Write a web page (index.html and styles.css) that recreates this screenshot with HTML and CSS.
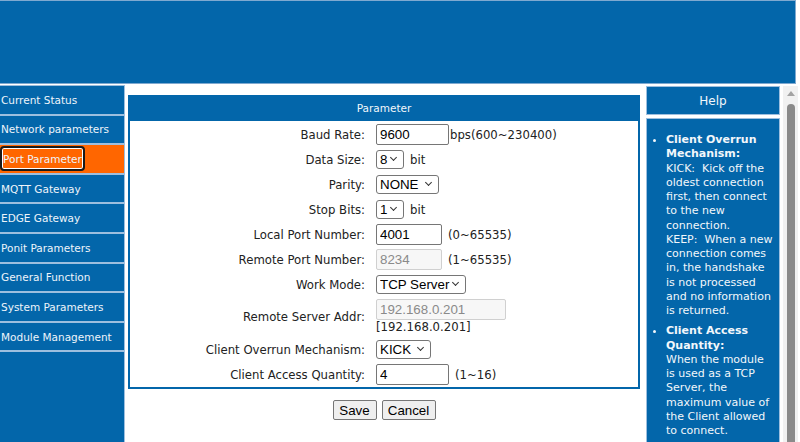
FILE: index.html
```html
<!DOCTYPE html>
<html>
<head>
<meta charset="utf-8">
<link rel="stylesheet" href="styles.css">
</head>
<body>
<div class="header"></div>
<div class="page">
  <nav class="nav">
    <a class="nav-item">Current Status</a>
    <a class="nav-item">Network parameters</a>
    <a class="nav-item active"><span class="focus">Port Parameter</span></a>
    <a class="nav-item">MQTT Gateway</a>
    <a class="nav-item">EDGE Gateway</a>
    <a class="nav-item">Ponit Parameters</a>
    <a class="nav-item">General Function</a>
    <a class="nav-item">System Parameters</a>
    <a class="nav-item">Module Management</a>
  </nav>
  <main class="main">
    <section class="panel">
      <div class="panel-title">Parameter</div>
      <div class="form">
        <label class="lbl">Baud Rate:</label>
        <div class="ctl"><input class="inp w73" type="text" value="9600"><span class="unit tight">bps(600~230400)</span></div>

        <label class="lbl">Data Size:</label>
        <div class="ctl"><span class="sel-wrap"><select class="sel w28"><option>8</option></select></span><span class="unit">bit</span></div>

        <label class="lbl">Parity:</label>
        <div class="ctl"><span class="sel-wrap"><select class="sel w63"><option>NONE</option></select></span></div>

        <label class="lbl">Stop Bits:</label>
        <div class="ctl"><span class="sel-wrap"><select class="sel w28"><option>1</option></select></span><span class="unit">bit</span></div>

        <label class="lbl">Local Port Number:</label>
        <div class="ctl"><input class="inp w66" type="text" value="4001"><span class="unit">(0~65535)</span></div>

        <label class="lbl">Remote Port Number:</label>
        <div class="ctl"><input class="inp w66" type="text" value="8234" disabled><span class="unit">(1~65535)</span></div>

        <label class="lbl">Work Mode:</label>
        <div class="ctl"><span class="sel-wrap"><select class="sel w90"><option>TCP Server</option></select></span></div>

        <label class="lbl">Remote Server Addr:</label>
        <div class="ctl stack"><input class="inp w130" type="text" value="192.168.0.201" disabled><span class="addr">[192.168.0.201]</span></div>

        <label class="lbl">Client Overrun Mechanism:</label>
        <div class="ctl"><span class="sel-wrap"><select class="sel w55"><option>KICK</option></select></span></div>

        <label class="lbl">Client Access Quantity:</label>
        <div class="ctl"><input class="inp w73" type="text" value="4"><span class="unit">(1~16)</span></div>
      </div>
    </section>
    <div class="actions">
      <button class="btn btn-save">Save</button>
      <button class="btn btn-cancel">Cancel</button>
    </div>
  </main>
  <aside class="help">
    <div class="help-title">Help</div>
    <div class="help-body">
      <ul class="help-list">
        <li><b>Client Overrun Mechanism:</b><br>KICK:&nbsp; Kick off the oldest connection first, then connect to the new connection.<br>KEEP:&nbsp; When a new connection comes in, the handshake is not processed and no information is returned.</li>
        <li><b>Client Access Quantity:</b><br>When the module is used as a TCP Server, the maximum value of the Client allowed to connect.</li>
      </ul>
    </div>
  </aside>
  <div class="scrollbar">
    <div class="arrow"></div>
    <div class="thumb"></div>
  </div>
</div>
</body>
</html>
```
FILE: styles.css
```css
html, body {
  margin: 0;
  padding: 0;
  background: #ffffff;
  overflow: hidden;
  height: 442px;
}
body {
  font-family: "DejaVu Sans", Verdana, sans-serif;
  width: 800px;
}
.header {
  width: 795px;
  height: 82px;
  background: #0366aa;
  border: 1px solid #7fa9d0;
  border-left: none;
  box-sizing: content-box;
}
.page {
  display: flex;
  align-items: flex-start;
  height: 358px;
}
.nav {
  width: 124px;
  height: 360px;
  margin-top: 1px;
  background: #0366aa;
  border-right: 1px solid #9dbfdf;
  border-top: 1px solid #9dbfdf;
  display: flex;
  flex-direction: column;
}
.nav-item {
  display: flex;
  align-items: center;
  height: 27.6px;
  border-bottom: 2px solid #9dbfdf;
  color: #eef4fa;
  font-size: 10.5px;
  padding-left: 1px;
  white-space: nowrap;
}
.nav-item.active {
  background: #ff6600;
  padding-left: 0;
}
.focus {
  display: flex;
  align-items: center;
  height: 25px;
  width: 85px;
  border: 2px solid #1a1a1a;
  border-radius: 4px;
  box-shadow: inset 0 0 0 1px #ffffff;
  box-sizing: border-box;
  padding-left: 1px;
}
.main {
  width: 512px;
  margin-left: 3px;
  margin-top: 11px;
}
.panel {
  border: 2px solid #0366aa;
  border-top: none;
  height: 294px;
  box-sizing: border-box;
}
.panel-title {
  background: #0366aa;
  color: #f2f7fb;
  text-align: center;
  font-size: 10.5px;
  height: 26px;
  line-height: 26px;
}
.form {
  display: grid;
  grid-template-columns: 235px 1fr;
  column-gap: 11px;
  row-gap: 4px;
  padding-top: 3px;
  align-items: center;
}
.lbl {
  text-align: right;
  font-size: 11.7px;
  color: #222;
}
.ctl {
  display: flex;
  align-items: center;
  min-height: 21px;
}
.ctl.stack {
  flex-direction: column;
  align-items: flex-start;
}
.inp {
  height: 21px;
  box-sizing: border-box;
  font-family: "Liberation Sans", Arial, sans-serif;
  font-size: 13.33px;
  border: 1px solid #767676;
  border-radius: 2px;
  padding: 1px 3px;
  color: #000;
  margin: 0;
}
.inp:disabled {
  background: #f7f7f7;
  border-color: #d0d0d0;
  color: #8a8a8a;
}
.sel-wrap {
  position: relative;
  display: inline-flex;
}
.sel-wrap::after {
  content: "";
  position: absolute;
  right: 8px;
  top: 5px;
  width: 4px;
  height: 4px;
  border-right: 1px solid #333;
  border-bottom: 1px solid #333;
  transform: rotate(45deg);
  pointer-events: none;
}
.sel {
  -webkit-appearance: none;
  appearance: none;
  height: 19px;
  box-sizing: border-box;
  font-family: "Liberation Sans", Arial, sans-serif;
  font-size: 13.33px;
  color: #000;
  background: #ffffff;
  border: 1px solid #767676;
  border-radius: 3px;
  margin: 0;
  padding: 0 0 0 3px;
  line-height: 17px;
}
.w28 { width: 28px; }
.w55 { width: 55px; }
.w63 { width: 63px; }
.w66 { width: 66px; }
.w73 { width: 73px; }
.w90 { width: 90px; }
.w130 { width: 130px; }
.unit {
  font-size: 11.7px;
  color: #222;
  margin-left: 6px;
}
.unit.tight { margin-left: 1px; }
.addr {
  font-size: 11.7px;
  color: #222;
  line-height: 15px;
}
.actions {
  display: flex;
  justify-content: center;
  gap: 5px;
  margin-top: 11px;
}
.btn {
  font-family: "Liberation Sans", Arial, sans-serif;
  font-size: 13.33px;
  height: 20px;
  padding: 0;
  margin: 0;
  background: #efefef;
  border: 1px solid #767676;
  border-radius: 2px;
  color: #000;
}
.btn-save { width: 44px; }
.btn-cancel { width: 54px; }
.help {
  width: 134px;
  margin-left: 6px;
  margin-top: 2px;
}
.help-title {
  background: #0366aa;
  border: 1px solid #9dbfdf;
  height: 29px;
  box-sizing: border-box;
  color: #f2f7fb;
  font-size: 12px;
  text-align: center;
  line-height: 28px;
}
.help-body {
  margin-top: 3px;
  background: #0366aa;
  border: 1px solid #9dbfdf;
  border-bottom: none;
  height: 330px;
  color: #f2f7fb;
  font-size: 11px;
  line-height: 14.25px;
}
.help-list {
  margin: 0;
  padding: 14px 4px 0 19px;
}
.help-list li {
  margin-bottom: 6px;
}
.scrollbar {
  width: 15px;
  margin-left: 3px;
  margin-top: 2px;
  height: 360px;
  background: #f1f1f1;
  display: flex;
  flex-direction: column;
  align-items: center;
}
.arrow {
  margin-top: 5px;
  width: 0;
  height: 0;
  border-left: 4px solid transparent;
  border-right: 4px solid transparent;
  border-bottom: 5px solid #a3a3a3;
}
.thumb {
  margin-top: 8px;
  width: 8px;
  flex: 1;
  background: #8a8a8a;
  border-radius: 4px 4px 0 0;
}
```
